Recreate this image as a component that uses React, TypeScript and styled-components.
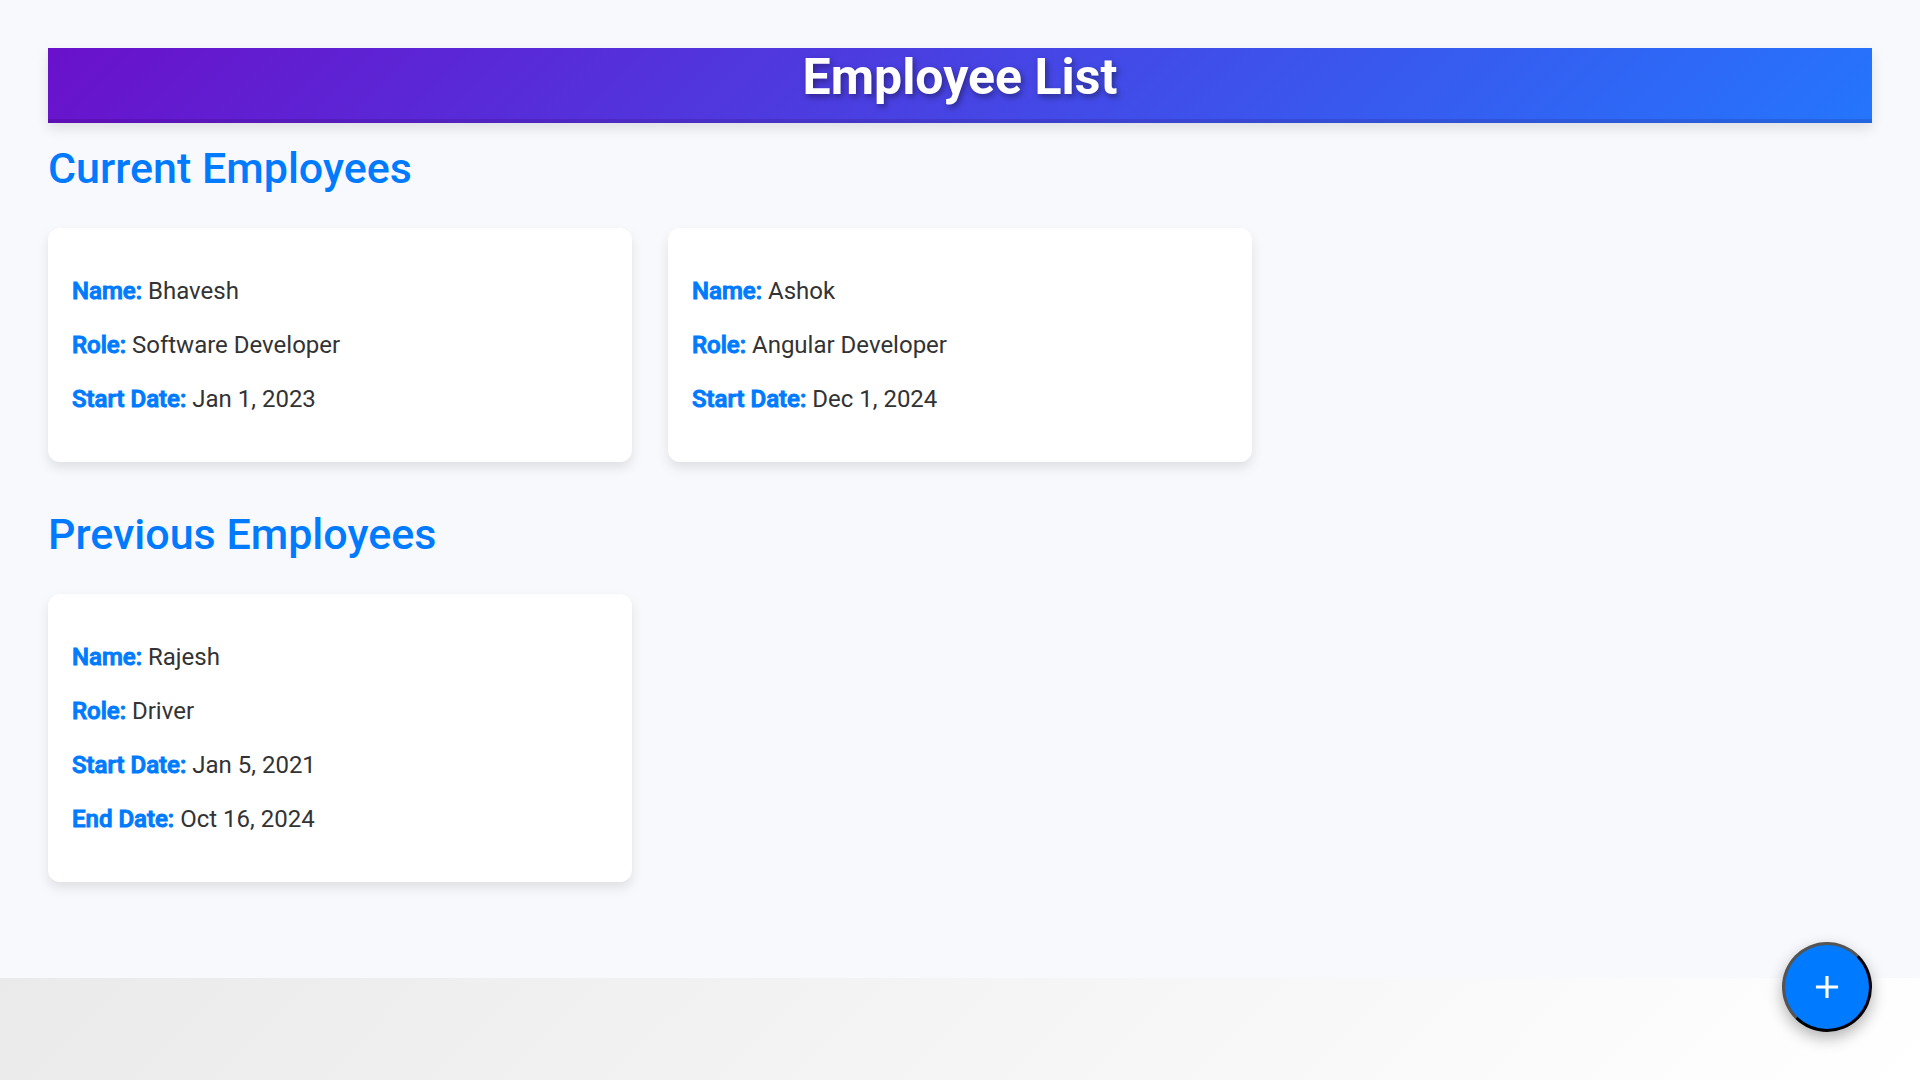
import React from "react";
import styled, { createGlobalStyle } from "styled-components";

const GlobalStyle = createGlobalStyle`
  *, *::before, *::after { box-sizing: border-box; }
  html {
    min-height: 100vh;
    background: linear-gradient(135deg, #e0e0e0, #ffffff);
  }
  body {
    margin: 0;
    font-family: Roboto, "Liberation Sans", sans-serif;
    color: #333333;
  }
`;

const Page = styled.main`
  padding: 48px;
  background: #f8f9fd;
`;

const Banner = styled.header`
  margin-bottom: 21px;
  padding-bottom: 13px;
  border-bottom: 4px solid rgba(0, 0, 0, 0.1);
  background: linear-gradient(135deg, #6a11cb, #2575fc);
  box-shadow: 0 6px 12px rgba(0, 0, 0, 0.1);
`;

const Title = styled.h1`
  margin: 0;
  font-size: 50px;
  line-height: 58px;
  font-weight: 700;
  text-align: center;
  color: #ffffff;
  text-shadow: 2px 3px 6px rgba(0, 0, 0, 0.4);
`;

const Section = styled.section`
  margin-bottom: 48px;
`;

const SectionTitle = styled.h2`
  margin: 0 0 36px;
  font-size: 43px;
  line-height: 48px;
  font-weight: 500;
  color: #007bff;
`;

const CardGrid = styled.div`
  display: grid;
  grid-template-columns: repeat(auto-fill, minmax(450px, 1fr));
  gap: 36px;
`;

const Card = styled.article`
  display: flex;
  flex-direction: column;
  gap: 24px;
  padding: 48px 24px;
  border-radius: 12px;
  background: #ffffff;
  box-shadow: 0 6px 12px rgba(0, 0, 0, 0.1);
`;

const Detail = styled.p`
  margin: 0;
  font-size: 24px;
  line-height: 30px;
`;

const Label = styled.strong`
  font-weight: 500;
  color: #007bff;
  -webkit-text-stroke: 1px #007bff;
`;

const AddButton = styled.button`
  position: fixed;
  right: 48px;
  bottom: 48px;
  display: flex;
  align-items: center;
  justify-content: center;
  width: 90px;
  height: 90px;
  padding: 0;
  border: 3px outset #000000;
  border-radius: 50%;
  background: #007bff;
  color: #ffffff;
  box-shadow: 0 6px 15px rgba(0, 0, 0, 0.3);
  cursor: pointer;
`;

interface Employee {
  name: string;
  role: string;
  startDate: string;
  endDate?: string;
}

const currentEmployees: Employee[] = [
  { name: "Bhavesh", role: "Software Developer", startDate: "Jan 1, 2023" },
  { name: "Ashok", role: "Angular Developer", startDate: "Dec 1, 2024" },
];

const previousEmployees: Employee[] = [
  { name: "Rajesh", role: "Driver", startDate: "Jan 5, 2021", endDate: "Oct 16, 2024" },
];

function EmployeeCard({ employee }: { employee: Employee }) {
  return (
    <Card>
      <Detail><Label>Name:</Label> {employee.name}</Detail>
      <Detail><Label>Role:</Label> {employee.role}</Detail>
      <Detail><Label>Start Date:</Label> {employee.startDate}</Detail>
      {employee.endDate && (
        <Detail><Label>End Date:</Label> {employee.endDate}</Detail>
      )}
    </Card>
  );
}

function EmployeeSection({ title, employees }: { title: string; employees: Employee[] }) {
  return (
    <Section>
      <SectionTitle>{title}</SectionTitle>
      <CardGrid>
        {employees.map((employee) => (
          <EmployeeCard key={employee.name} employee={employee} />
        ))}
      </CardGrid>
    </Section>
  );
}

export default function App() {
  return (
    <>
      <GlobalStyle />
      <Page>
        <Banner>
          <Title>Employee List</Title>
        </Banner>
        <EmployeeSection title="Current Employees" employees={currentEmployees} />
        <EmployeeSection title="Previous Employees" employees={previousEmployees} />
      </Page>
      <AddButton type="button" aria-label="Add employee">
        <svg width="38" height="38" viewBox="0 0 24 24" fill="currentColor" aria-hidden="true">
          <path d="M19 13h-6v6h-2v-6H5v-2h6V5h2v6h6v2z" />
        </svg>
      </AddButton>
    </>
  );
}
